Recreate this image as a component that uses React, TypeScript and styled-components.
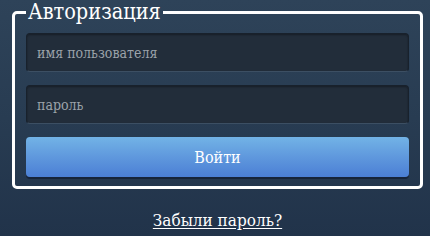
import React from 'react';
import styled, { createGlobalStyle } from 'styled-components';

const GlobalStyle = createGlobalStyle`
  html, body {
    margin: 0;
    padding: 0;
  }
  body {
    width: 430px;
    height: 236px;
    overflow: hidden;
    background: linear-gradient(to bottom, #2e4359 0%, #283c52 50%, #21334a 100%);
    font-family: "DejaVu Serif", "Liberation Serif", serif;
    font-stretch: condensed;
  }
`;

const Page = styled.div`
  display: flex;
  flex-direction: column;
  align-items: stretch;
  padding: 0 7px 0 12px;
`;

const Panel = styled.fieldset`
  margin: 0;
  border: 3px solid #ffffff;
  border-radius: 5px;
  padding: 9px 11px 9px;
  display: flex;
  flex-direction: column;
  gap: 13px;
  min-width: 0;
`;

const Legend = styled.legend`
  padding: 0 2px;
  margin-left: 0;
  color: #ffffff;
  font-size: 21.5px;
  line-height: 24px;
`;

const Field = styled.input`
  box-sizing: border-box;
  height: 39px;
  width: 100%;
  padding: 0 10px;
  border: 1px solid #18212c;
  border-bottom-color: #3c4f63;
  border-radius: 4px;
  background: #222d3a;
  box-shadow: inset 0 1px 2px rgba(0, 0, 0, 0.35);
  color: #e6e8ea;
  font-family: inherit;
  font-stretch: inherit;
  font-size: 14px;
  outline: none;

  &::placeholder {
    color: #9ca3aa;
  }
`;

const SubmitButton = styled.button`
  height: 40px;
  width: 100%;
  border: none;
  border-radius: 4px;
  background: linear-gradient(to bottom, #72b3e6 0%, #5f98dd 50%, #4b7fd5 100%);
  box-shadow: 0 2px 0 #16243a;
  color: #ffffff;
  font-family: inherit;
  font-stretch: inherit;
  font-size: 16px;
  cursor: pointer;
`;

const ForgotLink = styled.a`
  align-self: center;
  margin-top: 21px;
  color: #ffffff;
  font-size: 17px;
  line-height: 20px;
  text-decoration: underline;
  text-underline-offset: 2px;
  cursor: pointer;
`;

export default function App() {
  return (
    <>
      <GlobalStyle />
      <Page>
        <Panel>
          <Legend>Авторизация</Legend>
          <Field type="text" placeholder="имя пользователя" />
          <Field type="password" placeholder="пароль" />
          <SubmitButton type="button">Войти</SubmitButton>
        </Panel>
        <ForgotLink>Забыли пароль?</ForgotLink>
      </Page>
    </>
  );
}
